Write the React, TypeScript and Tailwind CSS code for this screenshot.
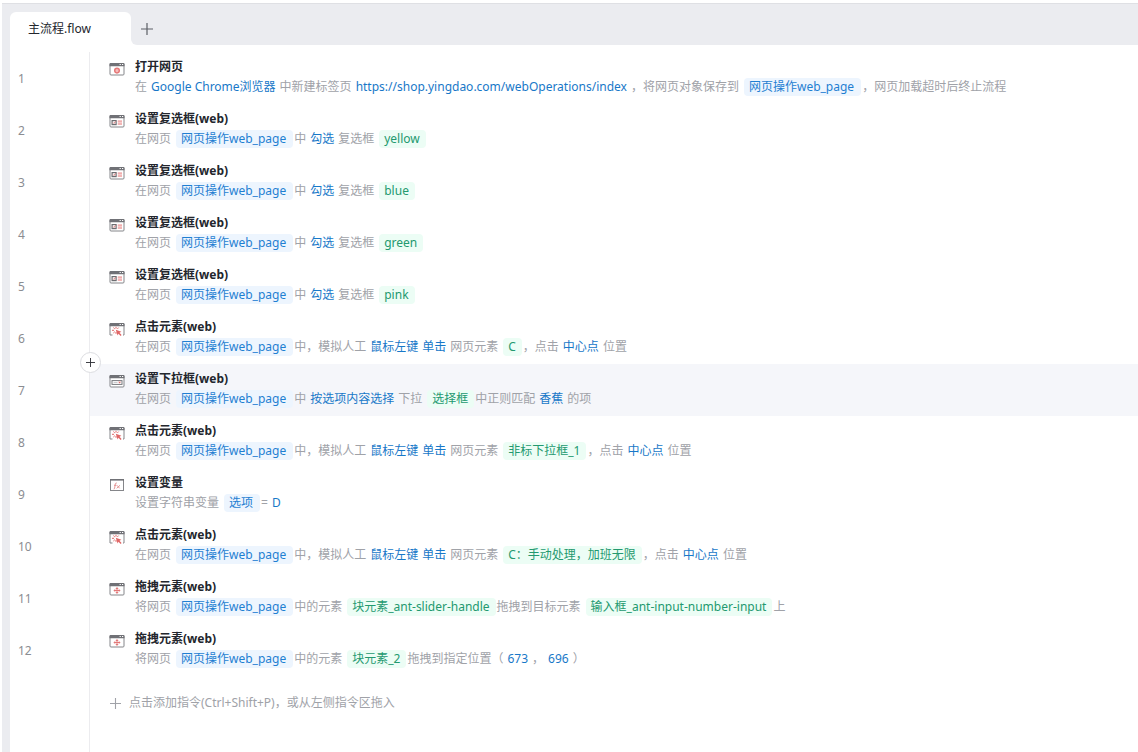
import type { ReactNode } from "react";

type IconName = "browser" | "checkbox" | "click" | "select" | "variable" | "drag";

// kind: t = plain text, v = value, w = variable chip, e = element chip
interface Part {
  kind: "t" | "v" | "w" | "e";
  text: string;
}

interface Step {
  icon: IconName;
  title: string;
  parts: Part[];
}

const t = (text: string): Part => ({ kind: "t", text });
const v = (text: string): Part => ({ kind: "v", text });
const w = (text: string): Part => ({ kind: "w", text });
const e = (text: string): Part => ({ kind: "e", text });

const page = w("网页操作web_page");

const checkStep = (color: string): Step => ({
  icon: "checkbox",
  title: "设置复选框(web)",
  parts: [t("在网页"), page, t("中"), v("勾选"), t("复选框"), e(color)],
});

const clickStep = (target: string): Step => ({
  icon: "click",
  title: "点击元素(web)",
  parts: [
    t("在网页"),
    page,
    t("中，模拟人工"),
    v("鼠标左键"),
    v("单击"),
    t("网页元素"),
    e(target),
    t("，点击"),
    v("中心点"),
    t("位置"),
  ],
});

const steps: Step[] = [
  {
    icon: "browser",
    title: "打开网页",
    parts: [
      t("在"),
      v("Google Chrome浏览器"),
      t("中新建标签页"),
      v("https://shop.yingdao.com/webOperations/index"),
      t("，将网页对象保存到"),
      page,
      t("，网页加载超时后终止流程"),
    ],
  },
  checkStep("yellow"),
  checkStep("blue"),
  checkStep("green"),
  checkStep("pink"),
  clickStep("C"),
  {
    icon: "select",
    title: "设置下拉框(web)",
    parts: [
      t("在网页"),
      page,
      t("中"),
      v("按选项内容选择"),
      t("下拉"),
      e("选择框"),
      t("中正则匹配"),
      v("香蕉"),
      t("的项"),
    ],
  },
  clickStep("非标下拉框_1"),
  {
    icon: "variable",
    title: "设置变量",
    parts: [t("设置字符串变量"), w("选项"), t("="), v("D")],
  },
  clickStep("C：手动处理，加班无限"),
  {
    icon: "drag",
    title: "拖拽元素(web)",
    parts: [
      t("将网页"),
      page,
      t("中的元素"),
      e("块元素_ant-slider-handle"),
      t("拖拽到目标元素"),
      e("输入框_ant-input-number-input"),
      t("上"),
    ],
  },
  {
    icon: "drag",
    title: "拖拽元素(web)",
    parts: [
      t("将网页"),
      page,
      t("中的元素"),
      e("块元素_2"),
      t("拖拽到指定位置（"),
      v("673"),
      t("，"),
      v("696"),
      t("）"),
    ],
  },
];

const SELECTED = 6;

const partStyles = {
  t: "text-[#a0a2a8]",
  v: "text-[#1878c8]",
  w: "ml-px -mr-[3px] rounded bg-[#edf5fe] pr-[7px] pl-[5px] text-[#1f7fd2]",
  e: "ml-px -mr-[3px] rounded bg-[#ecfdf5] pr-1.5 pl-[5px] text-[#23996f]",
};

const glyphs: Record<IconName, ReactNode> = {
  browser: (
    <circle cx="8" cy="8.6" r="2.3" fill="#f7bcbc" stroke="#e57878" strokeWidth="1.5" />
  ),
  checkbox: (
    <>
      <rect x="3.1" y="6.6" width="4" height="4" fill="none" stroke="#6c6d71" strokeWidth="1.2" />
      <path d="M4 8.5l1 1 1.6-2.2" fill="none" stroke="#d98080" />
      <rect x="8.8" y="6.2" width="4.2" height="4.8" fill="#f6cdcd" />
      <path d="M8.8 7.2h4.2M8.8 10h4.2" stroke="#efa0a0" />
    </>
  ),
  click: (
    <>
      <path
        d="M7 4.8v1.8M4.4 5.6l1.4 1.3M9.6 5.6L8.4 6.9M3 8.3h2M4.4 11l1.4-1.3M7 10v1.8"
        stroke="#e06666"
        fill="none"
      />
      <path d="M6.8 7.8l5.6 2-1.9 1 2.1 2.2-1 1-2.1-2.2-.9 1.6z" fill="#e06666" />
    </>
  ),
  select: (
    <>
      <rect x="3" y="6.6" width="10" height="3.8" fill="#fff" stroke="#77787c" />
      <path d="M4.5 8.5h4" stroke="#c9cacd" />
      <path d="M9.2 7.8h2.8l-1.4 1.6z" fill="#e06666" />
    </>
  ),
  variable: (
    <>
      <path
        d="M7.9 5.2c-1-.5-1.5.1-1.6.9l-.7 4.1c-.1.7-.4 1-.9.9M5 7.3h2.4"
        fill="none"
        stroke="#e28a8a"
        strokeWidth="0.9"
      />
      <path d="M8 7.3l2.6 3M11 7.3l-3.3 3" stroke="#e28a8a" strokeWidth="0.9" />
    </>
  ),
  drag: (
    <>
      <path d="M8 6v5M5.5 8.5h5" stroke="#e27878" />
      <path
        d="M8 5l1.6 1.9H6.4zM8 12l1.6-1.9H6.4zM4.4 8.5l1.8-1.6v3.2zM11.6 8.5L9.8 6.9v3.2z"
        fill="#e27878"
      />
    </>
  ),
};

function StepIcon({ name }: { name: IconName }) {
  return (
    <svg width="16" height="14" viewBox="0 0 16 14" className="mt-2.5 shrink-0" aria-hidden="true">
      {name === "variable" ? (
        <>
          <rect x="1.5" y="1.5" width="13" height="11" fill="#fff" stroke="#85868a" />
          <path d="M1 1.8h14" stroke="#707176" strokeWidth="1.6" />
        </>
      ) : (
        <>
          {name === "click" ? (
            <path d="M3.5 13H1V2h14v11h-1" fill="#fff" stroke="#85868a" />
          ) : (
            <rect x="1" y="1.5" width="14" height="11.5" rx="1" fill="#fff" stroke="#85868a" />
          )}
          <path d="M.5 1.8A1 1 0 0 1 1.5 1h13a1 1 0 0 1 1 .8V4.2H.5z" fill="#707176" />
          <path d="M10.6 2.5h1.2M13 2.5h1.2" stroke="#fff" strokeWidth="1.1" />
        </>
      )}
      {glyphs[name]}
    </svg>
  );
}

function Plus({ size }: { size: number }) {
  return (
    <svg width={size} height={size} viewBox="0 0 12 12" aria-hidden="true">
      <path d="M6 0v12M0 6h12" stroke="currentColor" strokeWidth="1.2" />
    </svg>
  );
}

function StepRow({ step, index }: { step: Step; index: number }) {
  const selected = index === SELECTED;
  return (
    <li className="relative flex h-[52px]">
      <span className="flex w-20 shrink-0 items-center border-r border-[#ececef] pt-0.5 pl-2 text-xs text-[#8b8d92]">
        {index + 1}
      </span>
      <div className={`flex min-w-0 flex-1 gap-2.5 pl-[19px] ${selected ? "bg-[#f5f6fa]" : ""}`}>
        <StepIcon name={step.icon} />
        <div className="pt-1.5 text-xs leading-[18px] whitespace-nowrap">
          <h2 className="font-bold text-[#23262d]">{step.title}</h2>
          <p className="mt-0.5 flex gap-1">
            {step.parts.map((part, i) => (
              <span key={i} className={partStyles[part.kind]}>
                {part.text}
              </span>
            ))}
          </p>
        </div>
      </div>
      {selected && (
        <button
          type="button"
          aria-label="插入指令"
          className="absolute -top-3 left-[70px] flex size-[21px] items-center justify-center rounded-full border border-[#dcdde1] bg-white text-[#2b2d33]"
        >
          <Plus size={9} />
        </button>
      )}
    </li>
  );
}

export default function App() {
  return (
    <div className="flex min-h-screen flex-col overflow-hidden bg-white pt-[3px] pl-0.5 font-['Noto_Sans','Noto_Sans_CJK_SC',sans-serif]">
      <div className="flex flex-1 flex-col border-t border-[#dfe0e4] bg-[#ebecf0] pl-2">
        <header className="flex h-[41px] items-end">
          <button
            type="button"
            className="h-[33px] w-[121px] rounded-t-md bg-white pl-[18px] text-left text-xs text-[#23262d]"
          >
            主流程.flow
          </button>
          <div className="flex-1 bg-white">
            <div className="rounded-bl-md bg-[#ebecf0]">
              <button
                type="button"
                aria-label="新建流程"
                className="flex h-[33px] w-[31px] items-center justify-center text-[#5c5f66]"
              >
                <Plus size={12} />
              </button>
            </div>
          </div>
        </header>

        <main className="flex flex-1 flex-col bg-white pt-[7px]">
          <ol>
            {steps.map((step, i) => (
              <StepRow key={i} step={step} index={i} />
            ))}
          </ol>
          <div className="flex flex-1">
            <div className="w-20 shrink-0 border-r border-[#ececef]" />
            <button
              type="button"
              className="flex h-[54px] items-center gap-2 self-start pl-5 text-xs whitespace-nowrap text-[#a0a2a8]"
            >
              <Plus size={11} />
              点击添加指令(Ctrl+Shift+P)，或从左侧指令区拖入
            </button>
          </div>
        </main>
      </div>
    </div>
  );
}
